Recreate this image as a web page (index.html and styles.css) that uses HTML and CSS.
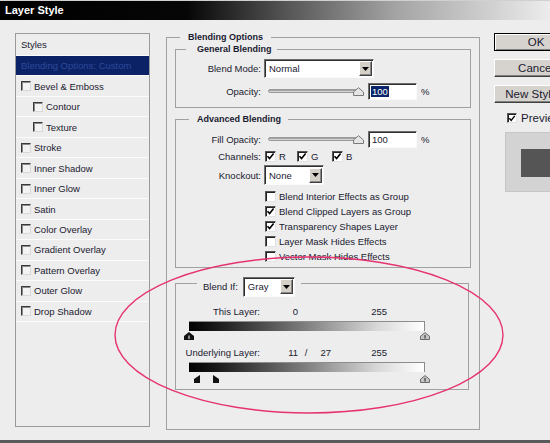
FILE: index.html
```html
<!DOCTYPE html>
<html>
<head>
<meta charset="utf-8">
<title>Layer Style</title>
<link rel="stylesheet" href="styles.css">
</head>
<body>
<div class="window">
  <div class="titlebar">Layer Style</div>
  <div class="content">
    <div class="styles-list">
      <div class="row row-head">Styles</div>
      <div class="row row-selected">Blending Options: Custom</div>
      <div class="row"><span class="cb"></span>Bevel &amp; Emboss</div>
      <div class="row sub"><span class="cb"></span>Contour</div>
      <div class="row sub"><span class="cb"></span>Texture</div>
      <div class="row"><span class="cb"></span>Stroke</div>
      <div class="row"><span class="cb"></span>Inner Shadow</div>
      <div class="row"><span class="cb"></span>Inner Glow</div>
      <div class="row"><span class="cb"></span>Satin</div>
      <div class="row"><span class="cb"></span>Color Overlay</div>
      <div class="row"><span class="cb"></span>Gradient Overlay</div>
      <div class="row"><span class="cb"></span>Pattern Overlay</div>
      <div class="row"><span class="cb"></span>Outer Glow</div>
      <div class="row"><span class="cb"></span>Drop Shadow</div>
    </div>

    <fieldset class="group main">
      <legend class="lg-main">Blending Options</legend>

      <fieldset class="group general">
        <legend class="lg-general">General Blending</legend>
        <div class="field f-mode">
          <span class="lbl">Blend Mode:</span>
          <div class="select sel-mode"><span class="sel-val">Normal</span><span class="sel-btn"><svg width="7" height="4" viewBox="0 0 7 4"><path d="M0 0H7L3.5 4Z" fill="#000"/></svg></span></div>
        </div>
        <div class="field f-slider f-opacity">
          <span class="lbl">Opacity:</span>
          <div class="slider"><div class="track"></div><svg class="thumb" width="11" height="9" viewBox="0 0 11 9"><path d="M0.5 8.5V5L5.5 0.7L10.5 5V8.5Z" fill="#e4e4e4" stroke="#7a7a7a"/></svg></div>
          <div class="num"><span class="hl">100</span></div>
          <span class="pct">%</span>
        </div>
      </fieldset>

      <fieldset class="group advanced">
        <legend class="lg-adv">Advanced Blending</legend>
        <div class="field f-slider f-fill">
          <span class="lbl">Fill Opacity:</span>
          <div class="slider"><div class="track"></div><svg class="thumb" width="11" height="9" viewBox="0 0 11 9"><path d="M0.5 8.5V5L5.5 0.7L10.5 5V8.5Z" fill="#e4e4e4" stroke="#7a7a7a"/></svg></div>
          <div class="num"><span class="num-val">100</span></div>
          <span class="pct">%</span>
        </div>
        <div class="field f-channels">
          <span class="lbl">Channels:</span>
          <span class="chan chan-r"><span class="ck"><svg width="9" height="9" viewBox="0 0 9 9"><path d="M1.5 4.2L3.6 6.6L7.6 1.6" fill="none" stroke="#000" stroke-width="1.6"/></svg></span>R</span>
          <span class="chan chan-g"><span class="ck"><svg width="9" height="9" viewBox="0 0 9 9"><path d="M1.5 4.2L3.6 6.6L7.6 1.6" fill="none" stroke="#000" stroke-width="1.6"/></svg></span>G</span>
          <span class="chan chan-b"><span class="ck"><svg width="9" height="9" viewBox="0 0 9 9"><path d="M1.5 4.2L3.6 6.6L7.6 1.6" fill="none" stroke="#000" stroke-width="1.6"/></svg></span>B</span>
        </div>
        <div class="field f-knock">
          <span class="lbl">Knockout:</span>
          <div class="select sel-knock"><span class="sel-val">None</span><span class="sel-btn"><svg width="7" height="4" viewBox="0 0 7 4"><path d="M0 0H7L3.5 4Z" fill="#000"/></svg></span></div>
        </div>
        <div class="opts">
          <div class="opt"><span class="ck"></span>Blend Interior Effects as Group</div>
          <div class="opt"><span class="ck"><svg width="9" height="9" viewBox="0 0 9 9"><path d="M1.5 4.2L3.6 6.6L7.6 1.6" fill="none" stroke="#000" stroke-width="1.6"/></svg></span>Blend Clipped Layers as Group</div>
          <div class="opt"><span class="ck"><svg width="9" height="9" viewBox="0 0 9 9"><path d="M1.5 4.2L3.6 6.6L7.6 1.6" fill="none" stroke="#000" stroke-width="1.6"/></svg></span>Transparency Shapes Layer</div>
          <div class="opt"><span class="ck"></span>Layer Mask Hides Effects</div>
          <div class="opt"><span class="ck"></span>Vector Mask Hides Effects</div>
        </div>
      </fieldset>

      <fieldset class="group blendif">
        <legend class="lg-if"><span class="if-lbl">Blend If:</span><span class="select sel-gray"><span class="sel-val">Gray</span><span class="sel-btn"><svg width="7" height="4" viewBox="0 0 7 4"><path d="M0 0H7L3.5 4Z" fill="#000"/></svg></span></span></legend>
        <div class="lrow lrow-this">
          <span class="l">This Layer:</span><span class="v1">0</span><span class="sl"></span><span class="v2"></span><span class="v3">255</span>
        </div>
        <div class="gbar"></div>
        <div class="thumbs">
          <svg class="th th-b0" width="10" height="8" viewBox="0 0 10 8"><path d="M0 8V4L5 0L10 4V8Z" fill="#111"/><path d="M5 3.5V7" stroke="#fff" stroke-width="1"/></svg>
          <svg class="th th-w" width="10" height="8" viewBox="0 0 10 8"><path d="M0.5 7.5V4.2L5 0.6L9.5 4.2V7.5Z" fill="#c4c4c4" stroke="#6a6a6a"/><path d="M5 3V6.5" stroke="#222" stroke-width="1"/></svg>
        </div>
        <div class="lrow lrow-under">
          <span class="l">Underlying Layer:</span><span class="v1">11</span><span class="sl">/</span><span class="v2">27</span><span class="v3">255</span>
        </div>
        <div class="gbar"></div>
        <div class="thumbs">
          <svg class="th th-l11" width="6" height="8" viewBox="0 0 6 8"><path d="M0 8V4L6 0V8Z" fill="#111"/></svg>
          <svg class="th th-r27" width="6" height="8" viewBox="0 0 6 8"><path d="M0 8V0L6 4V8Z" fill="#111"/></svg>
          <svg class="th th-w" width="10" height="8" viewBox="0 0 10 8"><path d="M0.5 7.5V4.2L5 0.6L9.5 4.2V7.5Z" fill="#c4c4c4" stroke="#6a6a6a"/><path d="M5 3V6.5" stroke="#222" stroke-width="1"/></svg>
        </div>
      </fieldset>
    </fieldset>

    <div class="actions">
      <div class="btn btn-default">OK</div>
      <div class="btn">Cancel</div>
      <div class="btn">New Style...</div>
      <div class="preview-row"><span class="pcb"><svg width="9" height="9" viewBox="0 0 9 9"><path d="M1.5 4.2L3.6 6.6L7.6 1.6" fill="none" stroke="#000" stroke-width="1.6"/></svg></span>Preview</div>
      <div class="swatch"><div class="swatch-inner"></div></div>
    </div>
  </div>

  <svg class="annot" width="550" height="443" viewBox="0 0 550 443"><ellipse cx="309" cy="335" rx="194" ry="78" fill="none" stroke="#e6336f" stroke-width="1.4"/></svg>
</div>
</body>
</html>
```

FILE: styles.css
```css
* { box-sizing: border-box; }
html, body { margin: 0; padding: 0; }
body {
  width: 550px;
  height: 443px;
  overflow: hidden;
  background: #ededed;
  font-family: "Liberation Sans", Arial, sans-serif;
  font-size: 9.5px;
  color: #1a1a30;
}
.window {
  position: relative;
  width: 550px;
  height: 443px;
  overflow: hidden;
  background: #ededed;
  border-top: 1px solid #d0d0d0;
  border-bottom: 3px solid #5a5a5a;
}
.titlebar {
  height: 19px;
  line-height: 19px;
  padding-left: 5px;
  color: #fff;
  font-weight: bold;
  font-size: 11px;
  background: linear-gradient(to right, #000 0%, #060606 34%, #555 52%, #a4a4a4 72%, #ececec 100%);
}
.content {
  display: flex;
  align-items: flex-start;
  padding-left: 15px;
}

/* styles list */
.styles-list {
  margin-top: 13px;
  flex: 0 0 135px;
  width: 135px;
  height: 394px;
  border: 1px solid #9a9a9a;
  display: flex;
  flex-direction: column;
}
.row {
  flex: none;
  height: 20.47px;
  display: flex;
  align-items: center;
  gap: 3px;
  padding-left: 5px;
  border-bottom: 1px solid #fbfbfb;
  white-space: nowrap;
}
.row-head { height: 22px; }
.row.sub { padding-left: 17px; }
.row-selected { background: #0b2266; color: #2e4a9b; }
.cb {
  width: 10px;
  height: 10px;
  flex: none;
  background: #f3f3f3;
  border: 1px solid;
  border-color: #3a3a3a #d8d8d8 #d8d8d8 #3a3a3a;
  box-shadow: inset 1px 1px 0 #8a8a8a;
}

/* group boxes */
fieldset.group {
  margin: 0;
  padding: 0;
  border: 1px solid #a0a0a0;
  min-width: 0;
}
fieldset.group > legend {
  font-weight: bold;
  font-size: 9px;
  line-height: 14px;
  white-space: nowrap;
}
fieldset.main {
  margin-top: 10px;
  margin-left: 16px;
  width: 314px;
  flex: none;
  padding-bottom: 39px;
}
.lg-main { margin-left: 13px; padding: 0 8px; }
fieldset.general, fieldset.advanced, fieldset.blendif { margin-left: 8px; margin-right: 8px; }
fieldset.general { margin-top: -2px; padding: 3px 0 7px 0; }
.lg-general { margin-left: 10px; padding: 0 5px 0 11px; }
fieldset.advanced { margin-top: 4px; padding: 5px 0 3px 0; }
.lg-adv { margin-left: 13px; padding: 0 7px 0 8px; }
fieldset.blendif { margin-top: 3px; padding: 7.5px 0 6px 0; margin-right: 10px; }
fieldset.group > legend.lg-if {
  margin-left: 21px;
  padding: 6px 6px 0 6px;
  display: flex;
  align-items: center;
  gap: 5px;
  font-weight: normal;
  font-size: 9.5px;
  line-height: 20px;
}

/* fields */
.field { display: flex; align-items: center; white-space: nowrap; }
.lbl { flex: 0 0 85px; text-align: right; margin-right: 3px; }
.f-mode { height: 19px; }
.f-slider { height: 17px; }
.f-opacity { margin-top: 5px; }
.f-channels { height: 13px; margin-top: 2px; }
.f-knock { height: 20px; margin-top: 2px; }

.select {
  display: flex;
  align-items: center;
  height: 100%;
  background: #fff;
  border: 1px solid;
  border-color: #6e6e6e #fafafa #fafafa #6e6e6e;
  box-shadow: inset 1px 1px 0 #2e2e2e;
  padding-left: 4px;
  color: #1a1a30;
}
.sel-mode { width: 110px; }
.sel-knock { width: 60px; }
.sel-gray { width: 52px; height: 20px; }
.sel-btn {
  margin-left: auto;
  margin-right: 1px;
  width: 13px;
  height: 15px;
  display: flex;
  align-items: center;
  justify-content: center;
  background: #d4d0c8;
  border: 1px solid;
  border-color: #ffffff #404040 #404040 #ffffff;
  box-shadow: inset -1px -1px 0 #888;
}

.slider {
  position: relative;
  width: 95px;
  height: 17px;
  margin-left: 4px;
  flex: none;
}
.track {
  width: 92px;
  height: 4px;
  margin-top: 6px;
  border-radius: 2px;
  background: linear-gradient(#8c8c8c, #c8c8c8 60%, #e6e6e6);
  border: 1px solid #9a9a9a;
}
.thumb { position: absolute; left: 85px; top: 4px; }
.num {
  width: 49px;
  height: 17px;
  margin-left: 5px;
  flex: none;
  display: flex;
  align-items: center;
  padding-left: 2px;
  background: #fff;
  border: 1px solid;
  border-color: #6e6e6e #fafafa #fafafa #6e6e6e;
  box-shadow: inset 1px 1px 0 #2e2e2e;
}
.hl { background: #0a246a; color: #fff; padding: 0 1px; line-height: 11px; }
.num-val { padding-left: 1px; }
.pct { margin-left: 4px; }

.ck {
  width: 11px;
  height: 11px;
  flex: none;
  display: flex;
  align-items: center;
  justify-content: center;
  background: #fff;
  border: 1px solid;
  border-color: #555 #e2e2e2 #e2e2e2 #555;
  box-shadow: inset 1px 1px 0 #222;
}
.chan { display: flex; align-items: center; gap: 3px; }
.chan-r { width: 32px; margin-left: 1px; }
.chan-g { width: 35px; }
.opts { margin-top: 3.5px; padding-left: 89px; }
.opt { height: 15px; display: flex; align-items: center; gap: 3px; white-space: nowrap; }

/* blend if */
.lrow { display: flex; align-items: center; height: 14px; white-space: nowrap; }
.lrow .l { width: 84px; text-align: right; }
.lrow .v1 { width: 38px; text-align: right; }
.lrow .sl { width: 16px; text-align: center; }
.lrow .v2 { width: 17px; text-align: right; }
.lrow .v3 { width: 56px; text-align: right; }
.lrow-under { margin-top: 5px; }
.gbar {
  margin-left: 13px;
  margin-top: 3px;
  width: 236px;
  height: 10px;
  background: linear-gradient(to right, #000 0%, #1a1a1a 12%, #7a7a7a 48%, #d8d8d8 80%, #fff 100%);
  border-top: 1px solid #8c8c8c;
  border-right: 1px solid #8c8c8c;
}
.thumbs {
  position: relative;
  margin-left: 13px;
  width: 236px;
  height: 8px;
  margin-top: 1px;
}
.lrow-under + .gbar + .thumbs { margin-top: 3px; }
.th { position: absolute; top: 0; }
.th-b0 { left: -5px; }
.th-w { left: 231px; }
.th-l11 { left: 5px; }
.th-r27 { left: 24px; }

/* right column */
.actions {
  margin-top: 13px;
  margin-left: 14px;
  width: 90px;
  flex: none;
  display: flex;
  flex-direction: column;
  align-items: flex-start;
}
.btn {
  width: 84px;
  height: 18px;
  margin-bottom: 8px;
  background: #d6d3ce;
  border: 1px solid;
  border-color: #fff #404040 #404040 #fff;
  box-shadow: inset -1px -1px 0 #808080;
  font-size: 11.5px;
  line-height: 16px;
  text-align: center;
  white-space: nowrap;
  color: #1a1a30;
}
.btn-default {
  border: 1px solid #000;
  box-shadow: inset 1px 1px 0 #fff, inset -1px -1px 0 #808080;
}
.preview-row {
  margin-top: 1px;
  margin-left: 13px;
  display: flex;
  align-items: center;
  gap: 4px;
  font-size: 11.5px;
  height: 12px;
  white-space: nowrap;
}
.pcb {
  width: 10px;
  height: 10px;
  display: flex;
  align-items: center;
  justify-content: center;
  background: #fff;
  border: 1px solid;
  border-color: #555 #e2e2e2 #e2e2e2 #555;
  box-shadow: inset 1px 1px 0 #222;
}
.swatch {
  margin-top: 8px;
  margin-left: 11px;
  width: 80px;
  height: 60px;
  background: #d3d3d3;
  border: 1px solid #c6c6c6;
  padding: 16px 0 0 15px;
}
.swatch-inner { width: 60px; height: 28px; background: #555; }

.annot { position: absolute; left: 0; top: -1px; pointer-events: none; }
```
